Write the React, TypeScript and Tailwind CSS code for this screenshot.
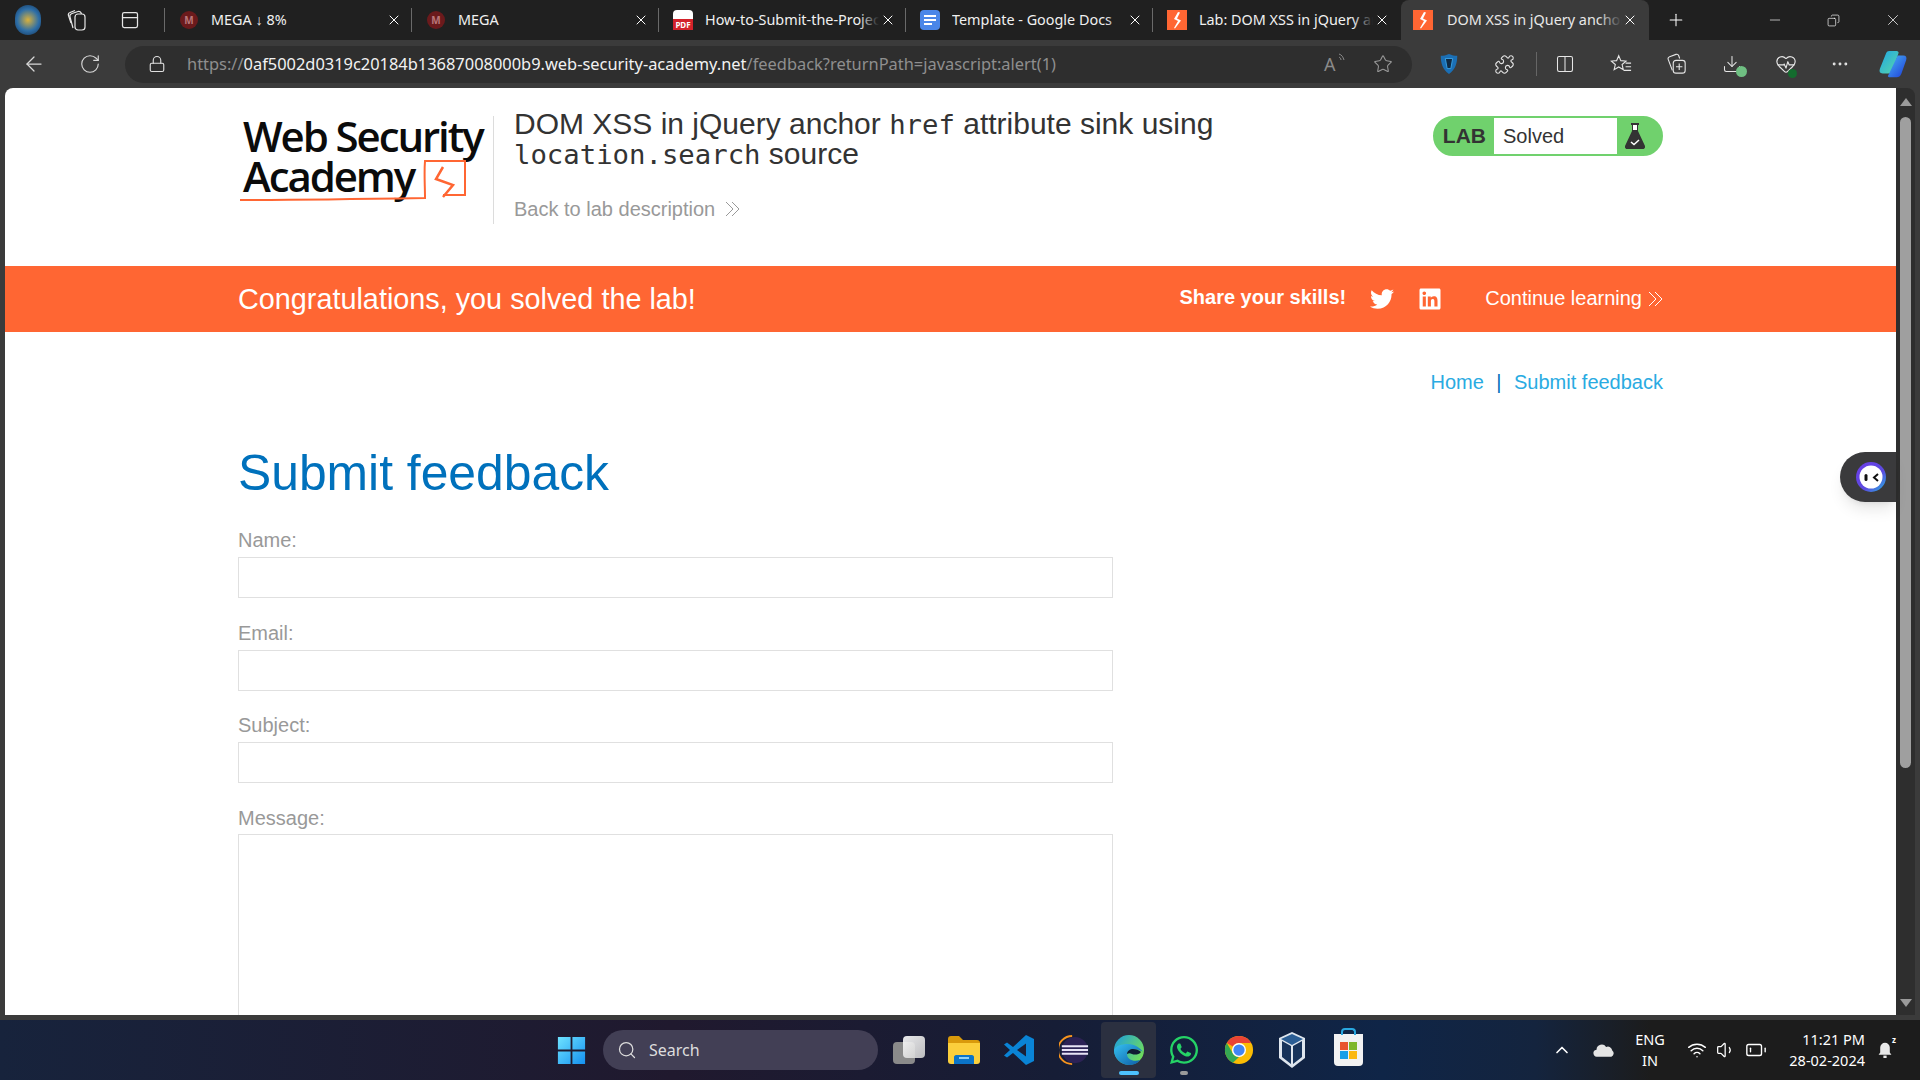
import { ArrowLeft, RotateCw, Lock, Star, Plus, Minus, X, Copy, Search, ChevronUp, Wifi, Volume1, BatteryLow, Puzzle, Columns2, Download, HeartPulse, MoreHorizontal, PanelTop } from 'lucide-react'
import { FaTwitter, FaLinkedin, FaWhatsapp } from 'react-icons/fa'

const tabs = [
  { title: 'MEGA ↓ 8%', icon: 'mega' },
  { title: 'MEGA', icon: 'mega' },
  { title: 'How-to-Submit-the-Project-Report', icon: 'pdf' },
  { title: 'Template - Google Docs', icon: 'docs' },
  { title: 'Lab: DOM XSS in jQuery anchor href', icon: 'lab' },
]

function Bolt({ className }: { className: string }) {
  return (
    <svg viewBox="0 0 20 20" className={className}>
      <rect width="20" height="20" fill="#ff6633" />
      <path d="M11 2 7 9l4 2-4 7 1 .5 6-8-4-2 3-6z" fill="#fff" />
    </svg>
  )
}

function TabIcon({ kind }: { kind: string }) {
  if (kind === 'mega') {
    return <span className="flex h-[18px] w-[18px] shrink-0 items-center justify-center rounded-full bg-[#6b1a1c] text-[10px] font-bold text-[#b9777a]">M</span>
  }
  if (kind === 'pdf') {
    return (
      <span className="flex h-5 w-5 shrink-0 flex-col items-center justify-end rounded-sm bg-white">
        <span className="flex h-[11px] w-5 items-center justify-center bg-[#d3222a] text-[8px] font-bold leading-none text-white">PDF</span>
      </span>
    )
  }
  if (kind === 'docs') {
    return (
      <span className="flex h-5 w-5 shrink-0 flex-col justify-center gap-[2px] rounded-sm bg-[#4a86e8] px-1">
        <span className="h-[2px] w-full bg-white" />
        <span className="h-[2px] w-full bg-white" />
        <span className="h-[2px] w-2 bg-white" />
      </span>
    )
  }
  return <Bolt className="h-5 w-5 shrink-0" />
}

function Tab({ title, icon }: { title: string; icon: string }) {
  return (
    <div className="flex h-10 w-[247px] shrink-0 items-center">
      <div className="h-6 w-px bg-[#6a6a6a]" />
      <div className="ml-[14px] flex w-[20px] justify-center"><TabIcon kind={icon} /></div>
      <div className="relative ml-3 w-[174px] overflow-hidden whitespace-nowrap text-[14.4px] text-[#f0f0f0]">
        {title}
        <div className="absolute inset-y-0 right-0 w-5 bg-gradient-to-r from-transparent to-[#202020]" />
      </div>
      <X size={16} strokeWidth={1.5} className="ml-[1px] text-white" />
    </div>
  )
}

function ChevronsRight({ className }: { className: string }) {
  return (
    <svg viewBox="0 0 16 16" fill="none" stroke="currentColor" strokeWidth="1" className={className}>
      <path d="M2 1l7 7-7 7M8 1l7 7-7 7" />
    </svg>
  )
}

function Logo() {
  return (
    <div className="relative h-[96px] w-[251px] shrink-0 pl-[5px] pt-[2px] font-['Open_Sans',sans-serif] text-[42px] font-semibold leading-[40px] tracking-[-2.1px] text-[#0b0b0b]">
      <div className="whitespace-nowrap">Web Security</div>
      <div className="whitespace-nowrap">Academy</div>
      <svg viewBox="0 0 251 96" fill="none" stroke="#ff6633" strokeWidth="2" className="absolute left-0 top-0 h-[96px] w-[251px]">
        <path d="M2 86c60 0 125-1 185-2 0-12-1-25 0-37l40 0 0 34-22 0" />
        <path d="M205 53l-7 12 17 6-10 12" strokeWidth="2.500" />
      </svg>
    </div>
  )
}

function Flask() {
  return (
    <svg viewBox="0 0 20 26" className="h-[26px] w-5">
      <rect x="6" y="0" width="8" height="2" fill="#333" />
      <path d="M7 2h6v6l7 15c.4 1.500-.4 3-2 3H2c-1.600 0-2.400-1.500-2-3L7 8z" fill="#333" />
      <rect x="8" y="2" width="4" height="5" fill="#fff" />
      <path d="M6 19l3 2.500 5-4.500" fill="none" stroke="#fff" strokeWidth="1.500" />
    </svg>
  )
}

function Field({ label }: { label: string }) {
  return (
    <div className="w-[875px]">
      <div className="h-[24px] text-[20px] leading-[24px] text-[#999]">{label}</div>
      <div className="mt-[5px] h-[41px] border border-[#e0e0e0]" />
    </div>
  )
}

function Edge() {
  return (
    <svg viewBox="0 0 32 32" className="h-8 w-8">
      <defs>
        <linearGradient id="edgeA" x1="0" y1="0" x2="1" y2="1"><stop offset="0" stopColor="#35c1f1" /><stop offset="1" stopColor="#0c59a4" /></linearGradient>
        <linearGradient id="edgeB" x1="0" y1="0" x2="1" y2="0.600"><stop offset="0" stopColor="#1b9de2" /><stop offset="1" stopColor="#6fdc5c" /></linearGradient>
      </defs>
      <circle cx="16" cy="16" r="15" fill="url(#edgeB)" />
      <path d="M1 16C1 24 8 31 16 31c5 0 9-2 11-5-6 2-13 0-13-6 0-3 3-5 6-5 3 0 8 1 10 3C27 14 22 10 15 10 8 10 3 12 1 16z" fill="url(#edgeA)" />
      <path d="M14 20c0-3 3-5 6-5 3 0 6 1 8 3-2 3-7 3-9 2-2-1-3-1-5 0z" fill="#0f1b33" />
    </svg>
  )
}

function Chrome() {
  return (
    <svg viewBox="0 0 32 32" className="h-[30px] w-[30px]">
      <circle cx="16" cy="16" r="15" fill="#fbbc04" />
      <path d="M16 1a15 15 0 0 1 13 7.500H16a7.500 7.500 0 0 0-6.500 3.750L3 8.500A15 15 0 0 1 16 1z" fill="#ea4335" />
      <path d="M3 8.500l6.500 11.250A7.500 7.500 0 0 0 16 23.500L9.500 29.500A15 15 0 0 1 3 8.500z" fill="#34a853" />
      <circle cx="16" cy="16" r="7.500" fill="#fff" />
      <circle cx="16" cy="16" r="6" fill="#4285f4" />
    </svg>
  )
}

function TaskIcon({ children, active, dot }: { children: React.ReactNode; active?: boolean; dot?: boolean }) {
  return (
    <div className={`relative flex h-[56px] w-[55px] shrink-0 items-center justify-center rounded ${active ? 'bg-[#2b3040]' : ''}`}>
      {children}
      {active && <div className="absolute bottom-[3px] h-1 w-5 rounded bg-[#4dc2ff]" />}
      {dot && <div className="absolute bottom-[3px] h-1 w-2 rounded bg-[#9a9a9a]" />}
    </div>
  )
}

export default function App() {
  return (
    <div className="flex h-screen w-full flex-col overflow-hidden bg-[#3b3b3b] font-['Liberation_Sans',sans-serif]">
      {/* tab strip */}
      <div className="flex h-10 shrink-0 items-center bg-[#202020] font-['Noto_Sans',sans-serif]">
        <div className="ml-[15px] h-[30px] w-[26px] rounded-full bg-[radial-gradient(circle,#d9b13c_0%,#2d6ea8_55%,#14304f_100%)]" />
        <svg viewBox="0 0 20 22" fill="none" stroke="#e6e6e6" strokeWidth="1.200" className="ml-[26px] h-[22px] w-5">
          <rect x="8" y="5" width="10" height="16" rx="3" />
          <path d="M6 19 3 8c-.5-2 .5-3 2-3.500L11 2.500c1.500-.5 3 .5 3.500 2.500" />
          <path d="M4 14 1.500 6.500C1 5 1.500 4 3 3.500L8 1.500" />
        </svg>
        <PanelTop size={20} strokeWidth={1.5} className="ml-[33px] text-[#e6e6e6]" />
        <div className="ml-[24px] flex">
          {tabs.map(t => <Tab key={t.title} title={t.title} icon={t.icon} />)}
        </div>
        <div className="ml-[2px] flex h-10 w-[248px] shrink-0 items-center rounded-t-lg bg-[#3b3b3b]">
          <Bolt className="ml-[12px] h-5 w-5 shrink-0" />
          <div className="relative ml-[14px] w-[175px] overflow-hidden whitespace-nowrap text-[14.4px] text-[#e8e8e8]">
            DOM XSS in jQuery anchor href
            <div className="absolute inset-y-0 right-0 w-6 bg-gradient-to-r from-transparent to-[#3b3b3b]" />
          </div>
          <X size={16} strokeWidth={1.5} className="text-white" />
        </div>
        <Plus size={20} strokeWidth={1.25} className="ml-[17px] text-white" />
        <Minus size={16} strokeWidth={1} className="ml-[81px] text-white" />
        <Copy size={13} strokeWidth={1.25} className="ml-[44px] -scale-x-100 text-white" />
        <X size={18} strokeWidth={1} className="ml-[44px] text-white" />
      </div>

      {/* toolbar */}
      <div className="flex h-12 shrink-0 items-center font-['Noto_Sans',sans-serif] text-[#d8d8d8]">
        <ArrowLeft size={24} strokeWidth={1.25} className="ml-[22px]" />
        <RotateCw size={22} strokeWidth={1.25} className="ml-[33px]" />
        <div className="ml-[24px] flex h-[37px] w-[1287px] shrink-0 items-center rounded-full bg-[#2e2e2e]">
          <Lock size={18} strokeWidth={1.5} className="ml-[23px] shrink-0 text-[#e0e0e0]" />
          <div className="ml-[21px] w-[1137px] shrink-0 whitespace-nowrap text-[16.42px] text-[#8f8f8f]">
            https://<span className="text-[#f2f2f2]">0af5002d0319c20184b13687008000b9.web-security-academy.net</span>/feedback?returnPath=javascript:alert(1)
          </div>
          <div className="relative h-5 w-5 shrink-0 text-[18px] leading-5 text-[#8a8a8a]">
            A
            <svg viewBox="0 0 8 10" fill="none" stroke="#8a8a8a" strokeWidth="1" className="absolute -right-[2px] -top-[1px] h-[10px] w-2">
              <path d="M1 1c3 1 4 3 5 6M1 4c1 .5 2 1.500 2 3" />
            </svg>
          </div>
          <Star size={20} strokeWidth={1.25} className="ml-[29px] shrink-0 text-[#9a9a9a]" />
        </div>
        <svg viewBox="0 0 20 24" className="ml-[27px] h-[22px] w-[20px] shrink-0">
          <path d="M10 1C7 2.500 4 3 1 3c0 8 2 15 9 20 7-5 9-12 9-20-3 0-6-.5-9-2z" fill="#1b6fb5" />
          <path d="M6 6h8l-2 11H8z" fill="#0f2a44" stroke="#3ba3e6" strokeWidth="1" />
        </svg>
        <Puzzle size={21} strokeWidth={1.25} className="ml-[35px] shrink-0 text-[#e6e6e6]" />
        <div className="ml-[21px] h-6 w-px shrink-0 bg-[#666]" />
        <Columns2 size={20} strokeWidth={1.25} className="ml-[18px] shrink-0 text-[#e6e6e6]" />
        <svg viewBox="0 0 24 24" fill="none" stroke="#e6e6e6" strokeWidth="1.200" className="ml-[35px] h-[22px] w-[22px] shrink-0">
          <path d="M9.500 3l2.300 5.300 5.700.5-4.300 3.800 1.300 5.600-5-3-5 3 1.300-5.600L1.500 8.800l5.700-.5z" />
          <path d="M17 11h6M17 15h6M15 19h8" />
        </svg>
        <svg viewBox="0 0 24 24" fill="none" stroke="#e6e6e6" strokeWidth="1.200" className="ml-[33px] h-[22px] w-[22px] shrink-0">
          <path d="M8 19 3.500 7c-.5-1.500 0-2.500 1.500-3l7-2.500c1.500-.5 2.500 0 3 1.500l1 3" />
          <rect x="9" y="8" width="13" height="14" rx="3" />
          <path d="M15.500 11.500v7M12 15h7" />
        </svg>
        <div className="relative ml-[35px] shrink-0">
          <Download size={20} strokeWidth={1.25} className="text-[#e6e6e6]" />
          <div className="absolute -bottom-[3px] -right-[5px] flex h-[11px] w-[11px] items-center justify-center rounded-full bg-[#6fbf82]" />
        </div>
        <div className="relative ml-[33px] shrink-0">
          <HeartPulse size={22} strokeWidth={1.25} className="text-[#e6e6e6]" />
          <div className="absolute -bottom-[3px] right-0 h-[9px] w-[9px] rounded-full bg-[#146c2e]" />
        </div>
        <MoreHorizontal size={20} strokeWidth={1.5} className="ml-[33px] shrink-0 text-[#e6e6e6]" />
        <svg viewBox="0 0 32 32" className="ml-[28px] h-[30px] w-[30px] shrink-0">
          <defs>
            <linearGradient id="copA" x1="0" y1="0" x2="1" y2="1"><stop offset="0" stopColor="#1fa6e6" /><stop offset="1" stopColor="#5ad8a6" /></linearGradient>
            <linearGradient id="copB" x1="0" y1="0" x2="1" y2="1"><stop offset="0" stopColor="#49b6f5" /><stop offset="1" stopColor="#1e3bd8" /></linearGradient>
          </defs>
          <path d="M12 2h8c1 0 2 1 2 2l-6 18c-1 3-3 4-5 4H5c-3 0-4-2-3-5L8 6c1-3 2-4 4-4z" fill="url(#copA)" />
          <path d="M21 7h6c3 0 4 2 3 5l-5 14c-1 3-3 4-5 4h-8c-1 0-2-1-1-2l10-21z" fill="url(#copB)" />
        </svg>
      </div>

      {/* page and scrollbar */}
      <div className="relative flex min-h-0 flex-1 px-[5px]">
        <div className="min-w-0 flex-1 overflow-hidden rounded-tl-lg bg-white">
          <header className="flex h-[178px] px-[233px] pt-[28px]">
            <div className="-mt-[2px]"><Logo /></div>
            <div className="ml-[4px] h-[108px] w-px bg-[#dcdcdc]" />
            <div className="ml-[20px] flex-1">
              <h2 className="-mt-[7px] w-[800px] text-[30px] leading-[29px] text-[#333]">
                DOM XSS in jQuery anchor <code className="font-['DejaVu_Sans_Mono',monospace] text-[27.3px]">href</code> attribute sink using <code className="font-['DejaVu_Sans_Mono',monospace] text-[27.3px]">location.search</code> source
              </h2>
              <div className="mt-[28px] flex items-center gap-[9px] text-[20px] leading-6 text-[#999]">
                Back to lab description
                <ChevronsRight className="h-4 w-4" />
              </div>
            </div>
            <div className="flex h-10 w-[230px] items-stretch rounded-full border-2 border-[#70d16d] bg-[#70d16d]">
              <div className="flex w-[59px] items-center justify-end pr-[8px] text-[21px] font-bold text-[#333]">LAB</div>
              <div className="flex w-[123px] items-center bg-white pl-[9px] text-[20px] text-[#333]">Solved</div>
              <div className="flex flex-1 items-center justify-center pr-[8px]"><Flask /></div>
            </div>
          </header>

          <section className="flex h-[66px] items-center bg-[#ff6633] px-[233px] text-white">
            <h4 className="mt-[2px] flex-1 text-[28.8px]">Congratulations, you solved the lab!</h4>
            <span className="-mt-[5px] text-[20px] font-bold">Share your skills!</span>
            <FaTwitter size={24} className="ml-[24px]" />
            <FaLinkedin size={24} className="ml-[24px]" />
            <span className="-mt-[2px] ml-[43px] text-[20px]">Continue learning</span>
            <ChevronsRight className="ml-[5px] h-4 w-4" />
          </section>

          <div className="px-[233px]">
            <nav className="mt-[38px] flex h-6 items-center justify-end text-[20px] text-[#29abe2]">
              Home<span className="mx-[12.5px] text-[#0071bc]">|</span>Submit feedback
            </nav>
            <h1 className="mt-[50px] h-[58px] text-[49.8px] leading-[58px] text-[#0071bc]">Submit feedback</h1>
            <div className="mt-[26px] flex flex-col gap-[22.5px]">
              <Field label="Name:" />
              <Field label="Email:" />
              <Field label="Subject:" />
              <div className="w-[875px]">
                <div className="h-[24px] text-[20px] leading-[24px] text-[#999]">Message:</div>
                <div className="mt-[4px] h-[300px] border border-[#e0e0e0]" />
              </div>
            </div>
          </div>
        </div>

        {/* scrollbar */}
        <div className="flex w-[19px] shrink-0 flex-col items-center rounded-tr-lg bg-[#2e2e2e] pt-[10px]">
          <div className="h-0 w-0 border-x-[6px] border-b-[8px] border-x-transparent border-b-[#9a9a9a]" />
          <div className="mt-[11px] h-[651px] w-[11px] rounded-full bg-[#9f9f9f]" />
          <div className="mb-[8px] mt-auto h-0 w-0 border-x-[6px] border-t-[8px] border-x-transparent border-t-[#9a9a9a]" />
        </div>

        {/* floating assistant */}
        <div className="absolute right-[24px] top-[364px] flex h-[50px] w-[56px] items-center rounded-l-full bg-[#3a3a3c] pl-4 shadow-lg">
          <svg viewBox="0 0 30 30" className="h-[30px] w-[30px]">
            <defs>
              <linearGradient id="bot" x1="0" y1="0" x2="1" y2="1"><stop offset="0" stopColor="#6d3be8" /><stop offset="0.600" stopColor="#5b4be0" /><stop offset="1" stopColor="#22b8e0" /></linearGradient>
            </defs>
            <circle cx="15" cy="15" r="15" fill="url(#bot)" />
            <circle cx="15" cy="15" r="11.500" fill="#fff" />
            <rect x="8.500" y="12" width="3" height="7" rx="1.500" fill="#111" />
            <path d="M22 12l-4 3.500 4 3.500" fill="none" stroke="#111" strokeWidth="2" />
          </svg>
        </div>
      </div>
      <div className="h-[5px] shrink-0" />

      {/* taskbar */}
      <footer className="flex h-[60px] shrink-0 items-center bg-[linear-gradient(90deg,#17233c_0%,#20192e_35%,#161d36_55%,#0f2547_72%,#14243e_80%,#1c1c1c_86%)] pl-[557px] font-['Noto_Sans',sans-serif] text-white">
        <svg viewBox="0 0 32 32" className="h-[29px] w-[29px] shrink-0">
          <defs>
            <linearGradient id="win" x1="0" y1="0" x2="1" y2="1"><stop offset="0" stopColor="#6fe3ff" /><stop offset="1" stopColor="#1490f0" /></linearGradient>
          </defs>
          <path d="M1 1h14v14H1zM17 1h14v14H17zM1 17h14v14H1zM17 17h14v14H17z" fill="url(#win)" />
        </svg>
        <div className="ml-[17px] flex h-10 w-[275px] shrink-0 items-center rounded-full bg-[#423f55]">
          <Search size={20} strokeWidth={1.5} className="ml-[14px] text-[#ddd]" />
          <span className="ml-[12px] text-[16px] text-[#ddd]">Search</span>
        </div>
        <div className="ml-[3px]">
          <TaskIcon>
            <div className="relative h-7 w-8">
              <div className="absolute bottom-0 left-0 h-[22px] w-[22px] rounded-sm bg-[#8a8a8a]" />
              <div className="absolute right-0 top-0 h-[22px] w-[22px] rounded-sm bg-gradient-to-br from-white to-[#cfcfcf] opacity-90" />
            </div>
          </TaskIcon>
        </div>
        <TaskIcon>
          <svg viewBox="0 0 32 28" className="h-7 w-8">
            <path d="M0 3c0-2 1-3 3-3h8l4 4h14c2 0 3 1 3 3v3H0z" fill="#d99a0b" />
            <path d="M0 7h32v18c0 2-1 3-3 3H3c-2 0-3-1-3-3z" fill="#fbcf3c" />
            <path d="M6 28v-7c0-1 1-2 2-2h16c1 0 2 1 2 2v7z" fill="#0b74c8" />
            <rect x="11" y="21" width="10" height="2" fill="#8fd0f5" />
          </svg>
        </TaskIcon>
        <TaskIcon>
          <svg viewBox="0 0 32 32" className="h-8 w-8">
            <path d="M23 1l8 4v22l-8 4-13-12-6 4.500-3-2L7 16 1 10.500l3-2 6 4.500z" fill="#0a84d6" />
            <path d="M23 9.500 14 16l9 6.500z" fill="#1a2038" />
          </svg>
        </TaskIcon>
        <TaskIcon>
          <svg viewBox="0 0 32 32" className="h-[30px] w-[30px]">
            <path d="M14 1A15 15 0 0 0 14 31" fill="none" stroke="#f7941e" strokeWidth="2" />
            <circle cx="17" cy="16" r="14" fill="#2c2255" />
            <path d="M3 12h28M3 16h28M3 20h28" stroke="#e8e4f5" strokeWidth="2" />
          </svg>
        </TaskIcon>
        <TaskIcon active><Edge /></TaskIcon>
        <TaskIcon dot><FaWhatsapp size={32} className="text-[#25d366]" /></TaskIcon>
        <TaskIcon><Chrome /></TaskIcon>
        <div className="-ml-[2px]">
          <TaskIcon>
            <svg viewBox="0 0 28 38" className="h-[38px] w-7">
              <path d="M14 1l13 6v20L14 37 1 27V7z" fill="#dfe6ee" />
              <path d="M14 3l11 5-11 6L3 8z" fill="#2a5d94" />
              <path d="M4 10l9 5v18L4 26zM24 10l-9 5v18l9-7z" fill="#17335a" />
            </svg>
          </TaskIcon>
        </div>
        <div className="ml-[2px]">
          <TaskIcon>
            <div className="relative flex h-[32px] w-[29px] items-center justify-center rounded-b bg-[#f2f2f2]">
              <div className="absolute -top-[6px] h-[7px] w-[15px] rounded-t border-2 border-b-0 border-[#29a8e0]" />
              <div className="grid grid-cols-2 gap-px">
                <span className="h-[8px] w-[8px] bg-[#e8542f]" />
                <span className="h-[8px] w-[8px] bg-[#7fb72a]" />
                <span className="h-[8px] w-[8px] bg-[#1a9fe8]" />
                <span className="h-[8px] w-[8px] bg-[#fbb810]" />
              </div>
            </div>
          </TaskIcon>
        </div>
        <ChevronUp size={20} strokeWidth={2} className="ml-[176px] shrink-0" />
        <svg viewBox="0 0 24 16" className="ml-[21px] h-[15px] w-[21px] shrink-0">
          <path d="M5 15a4 4 0 0 1-1-8 6 6 0 0 1 11-3 5 5 0 0 1 7 4 4 4 0 0 1-1 7z" fill="#e4e4e4" />
        </svg>
        <div className="ml-[21px] flex w-[30px] shrink-0 flex-col items-center text-[14.5px] leading-[21px]">
          <span>ENG</span>
          <span>IN</span>
        </div>
        <Wifi size={20} strokeWidth={1.75} className="ml-[22px] shrink-0" />
        <Volume1 size={20} strokeWidth={1.5} className="ml-[9px] shrink-0" />
        <BatteryLow size={22} strokeWidth={1.5} className="ml-[9px] shrink-0" />
        <div className="ml-[16px] flex w-[82px] shrink-0 flex-col items-end text-[14.5px] leading-[21px]">
          <span>11:21 PM</span>
          <span>28-02-2024</span>
        </div>
        <div className="relative ml-[12px] shrink-0">
          <svg viewBox="0 0 20 24" className="h-5 w-4">
            <path d="M10 3a6 6 0 0 1 6 6v6l2 3H2l2-3V9a6 6 0 0 1 6-6z" fill="#e8e8e8" />
            <rect x="8" y="19" width="4" height="3" fill="#e8e8e8" />
          </svg>
          <span className="absolute -right-[3px] -top-[4px] text-[8px] font-bold leading-none">z</span>
        </div>
      </footer>
    </div>
  )
}
